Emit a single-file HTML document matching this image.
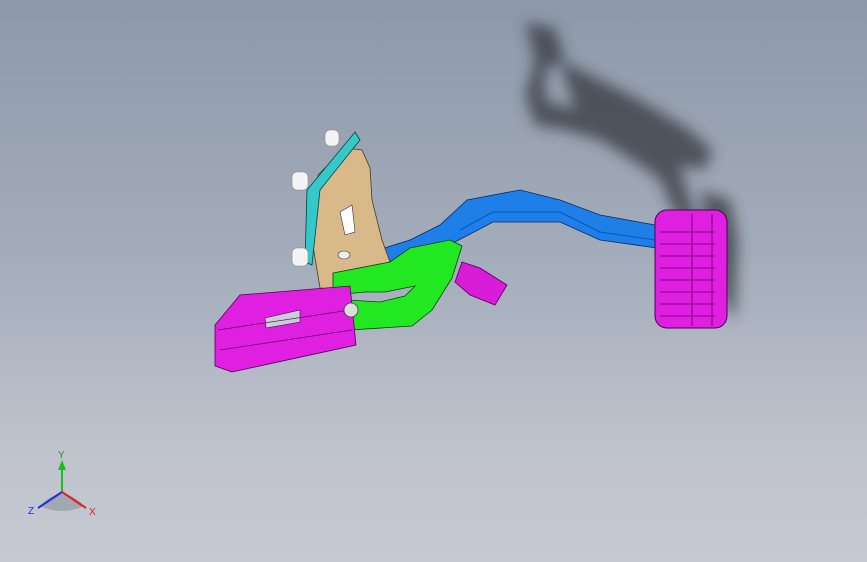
<!DOCTYPE html><html><head><style>
html,body{margin:0;padding:0}
body{width:867px;height:562px;overflow:hidden;background:linear-gradient(180deg,#8d99aa 0%,#a3acba 45%,#bfc3cd 80%,#c6c9d2 100%);font-family:"Liberation Sans",sans-serif}
</style></head><body>
<svg width="867" height="562" viewBox="0 0 867 562" style="position:absolute;left:0;top:0">
<defs>
<filter id="b" x="-50%" y="-50%" width="200%" height="200%"><feGaussianBlur stdDeviation="7"/></filter>
</defs>
<g filter="url(#b)" fill="#2e3338" opacity="0.7">
<path d="M525 22 L555 28 L565 60 L545 70 L545 100 L575 110 L560 60 L590 75 L640 100 L690 130 L712 150 L705 170 L680 165 L690 200 L700 225 L675 215 L660 180 L640 165 L600 140 L565 130 L535 125 L525 95 L535 60 Z"/>
<path d="M700 190 L730 200 L738 240 L735 320 L722 300 L710 240 Z"/>
</g>
<!-- blue arm -->
<path d="M378 250 L410 240 L440 225 L467 200 L520 190 L560 200 L600 215 L655 225 L657 248 L600 240 L560 222 L493 222 L453 243 L420 255 L387 262 Z" fill="#1f7fe8" stroke="#0a2a60" stroke-width="0.8"/>
<path d="M460 230 L493 212 L560 212 L600 232 L655 240" fill="none" stroke="#0b56b8" stroke-width="1"/>
<!-- pad -->
<rect x="655" y="210" width="72" height="118" rx="12" fill="#e020e0" stroke="#500050" stroke-width="1"/>
<g stroke="#600060" stroke-width="0.8" fill="none">
<path d="M660 232H715M660 244H715M660 256H715M660 268H715M660 280H715M660 292H715M660 304H715M660 316H715M692 214V326M712 214V326"/>
</g>
<!-- tan bracket -->
<path d="M318 175 L345 148 L362 150 L370 168 L372 200 L382 240 L390 262 L345 290 L320 288 L312 240 Z" fill="#d9b98a" stroke="#4a3a20" stroke-width="0.8"/>
<path d="M340 212 L352 205 L355 232 L345 235 Z" fill="#fff" stroke="#333" stroke-width="0.6"/>
<ellipse cx="344" cy="255" rx="6" ry="4" fill="#eee" stroke="#333" stroke-width="0.6"/>
<path d="M355 132 L360 140 L320 190 L312 265 L305 262 L307 190 Z" fill="#35c8c8" stroke="#0a4040" stroke-width="0.8"/>
<g fill="#f4f4f4" stroke="#888" stroke-width="0.6">
<rect x="292" y="172" width="16" height="18" rx="5"/>
<rect x="292" y="248" width="16" height="18" rx="5"/>
<rect x="325" y="130" width="14" height="16" rx="5"/>
</g>
<!-- green -->
<path d="M333 273 L390 262 L410 248 L450 240 L462 246 L452 278 L432 310 L412 326 L350 330 L348 300 L380 302 L405 296 L415 286 L385 292 L365 292 L333 295 Z" fill="#22e822" stroke="#0a400a" stroke-width="0.8"/>
<!-- small magenta -->
<path d="M462 262 L480 268 L507 285 L495 305 L470 295 L455 282 Z" fill="#d81cd8" stroke="#500050" stroke-width="0.8"/>
<!-- magenta bracket -->
<path d="M215 325 L240 295 L350 286 L356 345 L232 372 L215 366 Z" fill="#e020e0" stroke="#500050" stroke-width="0.8"/>
<path d="M265 318 L300 310 L300 322 L266 328 Z" fill="#c9cfd8" stroke="#500050" stroke-width="0.6"/>
<path d="M218 330 L350 310 M220 350 L352 330" stroke="#600060" stroke-width="0.7" fill="none"/>
<circle cx="351" cy="310" r="7" fill="#ddd" stroke="#444" stroke-width="0.8"/>
<!-- triad -->
<g transform="translate(62,492)">
<path d="M-22 14 Q0 -10 22 14 Q0 24 -22 14Z" fill="#9aa0a8" opacity="0.8"/>
<line x1="0" y1="0" x2="0" y2="-30" stroke="#18c018" stroke-width="2"/>
<polygon points="-4,-22 4,-22 0,-32" fill="#18c018"/>
<line x1="0" y1="0" x2="-24" y2="16" stroke="#2030e0" stroke-width="2"/>
<line x1="0" y1="0" x2="24" y2="16" stroke="#e02020" stroke-width="2"/>
<text x="-4" y="-34" font-size="10" fill="#18a018">Y</text>
<text x="-34" y="22" font-size="10" fill="#2030e0">Z</text>
<text x="27" y="23" font-size="10" fill="#e02020">X</text>
</g>
</svg>
</body></html>
